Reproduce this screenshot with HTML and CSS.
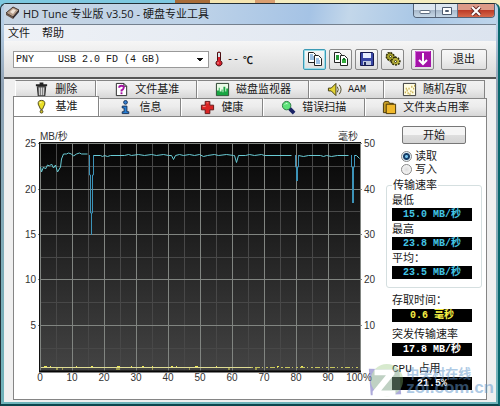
FILE: index.html
```html
<!DOCTYPE html>
<html lang="zh-CN">
<head>
<meta charset="utf-8">
<meta name="viewport" content="width=device-width">
<title>HD Tune 专业版 v3.50 - 硬盘专业工具</title>
<link rel="stylesheet" href="styles.css">
</head>
<body>
<div class="window">
  <header class="titlebar">
    <svg class="app-icon" viewBox="0 0 16 14" aria-hidden="true"><path d="M1 7 8 1l6 3-6 7z" fill="#b59c88" stroke="#40352f"/><path d="m1 7 7 4v2L1 9z" fill="#665247"/><path d="m8 11 6-7v2l-6 7z" fill="#30282a"/><path d="m5 6 3-3 3 1-3 4z" fill="#eee2d6"/></svg>
    <h1>HD Tune 专业版 v3.50 - 硬盘专业工具</h1>
    <div class="caption-buttons">
      <button type="button" aria-label="最小化"><svg viewBox="0 0 12 10"><rect x="1" y="4.500" width="10" height="3" rx="1" fill="#fff" stroke="#5d6c80"/></svg></button>
      <button type="button" aria-label="最大化"><svg viewBox="0 0 12 10"><path d="M1.500 1.500h9v7h-9z" fill="#fff" stroke="#4e5c70"/><path d="M4.500 4.500h3v1h-3z" fill="#fff" stroke="#4e5c70"/></svg></button>
      <button type="button" class="close" aria-label="关闭"><svg viewBox="0 0 12 10"><path d="m2 1 8 8m0-8-8 8" stroke="#6c2c29" stroke-width="4"/><path d="m2 1 8 8m0-8-8 8" stroke="#fff" stroke-width="2"/></svg></button>
    </div>
  </header>
  <nav class="menubar">
    <button type="button">文件</button>
    <button type="button">帮助</button>
  </nav>
  <div class="toolbar">
    <select class="drive" aria-label="驱动器"><option>PNY&nbsp;&nbsp;&nbsp;&nbsp;USB 2.0 FD (4 GB)</option></select>
    <div class="temperature">
      <svg viewBox="0 0 8 16" aria-hidden="true"><path d="M2.500 1.500q1.500-1 3 0v8q2 1.500 1.500 3.500-1 2-3 2t-3-2q-.5-2 1.500-3.500z" fill="#d8202c" stroke="#4b1114"/><path d="M3 2h2v4H3z" fill="#dbe8ec"/><path d="M3 11v2" stroke="#ff9c9c"/></svg>
      <span>--</span><b>℃</b>
    </div>
    <div class="actions">
      <button type="button" class="focused" aria-label="复制文本"><svg viewBox="0 0 16 16"><path d="M1.500 1.500h5l2 2v8h-7z" fill="#fff" stroke="#222"/><path d="M3 4h3M3 6h4M3 8h4" stroke="#3a80c8"/><path d="M7.500 4.500h4l3 3v7h-7z" fill="#fff" stroke="#222"/><path d="M9 8h3M9 10h4M9 12h4" stroke="#3a80c8"/></svg></button>
      <button type="button" aria-label="复制图像"><svg viewBox="0 0 16 16"><path d="M1.500 1.500h5l2 2v8h-7z" fill="#fff" stroke="#222"/><path d="M3 4h3v5H3z" fill="#269b38"/><path d="M7.500 4.500h4l3 3v7h-7z" fill="#fff" stroke="#222"/><path d="M9 8h4v4H9z" fill="#35ad3c"/><path d="M10 7h2v2h-2z" fill="#14712b"/></svg></button>
      <button type="button" aria-label="保存"><svg viewBox="0 0 16 16"><path d="M1.500 1.500h12l1 1v12h-13z" fill="#3947a5" stroke="#15184e"/><path d="M4 2h8v5H4z" fill="#e8efff"/><path d="M4 10h8v4H4z" fill="#bfc8df"/><path d="M5 11h2v3H5z" fill="#1d275f"/></svg></button>
      <button type="button" aria-label="选项"><svg viewBox="0 0 16 16"><path d="M5.500 1.500 8 3l2 3-1 3-4 1-3-2-1-3 2-3z" fill="#a9a42c" stroke="#302e0c" stroke-width="1.500" stroke-dasharray="2 1"/><path d="m10 6 3 1 2 3-1 3-3 1-4-1-1-3 2-3z" fill="#b7b03a" stroke="#302e0c" stroke-width="1.500" stroke-dasharray="2 1"/><circle cx="5.500" cy="5.500" r="1" fill="#fff" stroke="#403d10"/><circle cx="10.500" cy="10.500" r="1" fill="#fff" stroke="#403d10"/></svg></button>
      <button type="button" class="download" aria-label="最小化到托盘"><svg viewBox="0 0 16 16"><path d="M0 0h16v16H0z" fill="#a413a8"/><path d="M.5 15V.5H15" fill="none" stroke="#d56ad9"/><path d="M8 2v11M4 9l4 4 4-4" fill="none" stroke="#fff" stroke-width="2"/></svg></button>
      <button type="button" class="exit">退出</button>
    </div>
  </div>
  <main>
    <div class="tabs" role="tablist">
      <div class="tab-row back">
        <button type="button" role="tab" class="w81"><svg viewBox="0 0 16 16"><path d="M3.500 5h9l-1 10h-7z" fill="#777" stroke="#222"/><path d="M6 6v8m2-8v8m2-8v8" stroke="#ddd"/><path d="M2 3.500h12M6 1.500h4" stroke="#222" stroke-width="2"/></svg>删除</button>
        <button type="button" role="tab" class="w101"><svg viewBox="0 0 16 16"><path d="M2.500 1.500h8l3 3v10h-11z" fill="#fff" stroke="#222"/><path d="M10.500 1.500v3h3" fill="none" stroke="#222"/><path d="M5.500 6q0-2 2.500-2t2.500 2Q10 8 8 9v1" fill="none" stroke="#a512a3" stroke-width="2"/><path d="M7 11h2v2H7z" fill="#a512a3"/></svg>文件基准</button>
        <button type="button" role="tab" class="w112"><svg viewBox="0 0 16 16"><path d="M1.500 1.500h13v13h-13z" fill="#e8fae5" stroke="#223a28"/><path d="M2 9h2V6h1v4h2V8h1v3h1V5h2v5h1V7h2v7H2z" fill="#18a542"/></svg>磁盘监视器</button>
        <button type="button" role="tab" class="w75"><svg viewBox="0 0 16 16"><path d="M1.500 6.500h3l5-5v13l-5-5h-3z" fill="#e4d434" stroke="#3d3710"/><path d="M11 5q2 3 0 6m2-8q4 5 0 10" fill="none" stroke="#4b4520"/></svg><span class="mono">AAM</span></button>
        <button type="button" role="tab" class="w101"><svg viewBox="0 0 16 16"><path d="M1.500 1.500h13v13h-13z" fill="#fffce2" stroke="#333"/><path d="M3 11h1m1-2h1m0 3h1m0-5h1m1 3h1m0-5h1m1 2h1m-2 4h1m1-7h1M4 7h1m3 6h1" stroke="#b99a27" stroke-width="2"/></svg>随机存取</button>
      </div>
      <div class="tab-row front">
        <button type="button" role="tab" aria-selected="true" class="w85 active"><svg viewBox="0 0 16 16"><path d="M8 1.500q4 0 3.500 4L9 11H7L4.500 5.500Q4 1.500 8 1.500z" fill="#eadf27" stroke="#464115"/><circle cx="8" cy="13.500" r="1.500" fill="#d9cb26" stroke="#464115"/><path d="M6 4h2" stroke="#fffbd0"/></svg>基准</button>
        <button type="button" role="tab" class="w81"><svg viewBox="0 0 16 16"><circle cx="8" cy="2.500" r="2" fill="#3682d6" stroke="#173054"/><path d="M4.500 6.500h5v6h2v2h-7v-2h2v-4h-2z" fill="#2680d8" stroke="#173054"/></svg>信息</button>
        <button type="button" role="tab" class="w81"><svg viewBox="0 0 16 16"><path d="M5.500 1.500h5v4h4v5h-4v4h-5v-4h-4v-5h4z" fill="#da2424" stroke="#611616"/><path d="M7 3h2M3 7h3" stroke="#f58c84"/></svg>健康</button>
        <button type="button" role="tab" class="w101"><svg viewBox="0 0 16 16"><path d="m9 9 5 5" stroke="#192365" stroke-width="4"/><circle cx="6" cy="6" r="4.500" fill="#5de279" stroke="#27783f"/><path d="M4 5q1-2 3-1" fill="none" stroke="#d8ffde"/></svg>错误扫描</button>
        <button type="button" role="tab" class="w122"><svg viewBox="0 0 16 16"><path d="M1.500 3.500 3 1.500h4l1 2h4v10h-10.500z" fill="#c59c22" stroke="#443407"/><path d="M4.500 4.500h10v10h-10z" fill="#f0b82b" stroke="#443407"/></svg>文件夹占用率</button>
      </div>
    </div>
    <section class="panel">
      <svg class="chart" viewBox="14 116 364 270" role="img" aria-label="传输速率与存取时间">
        <defs><linearGradient id="plot" x2="0" y2="1"><stop stop-color="#050505"/><stop offset="1" stop-color="#444"/></linearGradient></defs>
        <path d="M39 141h322v230H39z" fill="url(#plot)"/>
        <path d="M56.500 142v228m32-228v228m32-228v228m32-228v228m32-228v228m32-228v228m32-228v228m32-228v228m32-228v228m32-228v228M40 165.500h320M40 210.500h320M40 256.500h320M40 301.500h320M40 347.500h320" stroke="#484848" fill="none"/>
        <path d="M40.500 142v228m32-228v228m32-228v228m32-228v228m32-228v228m32-228v228m32-228v228m32-228v228m32-228v228m32-228v228m32-228v228M38 142.500h324M38 188.500h324M38 233.500h324M38 278.500h324M38 324.500h324" stroke="#818581" fill="none"/>
        <path d="M39 141.500h322M39.500 141v230" stroke="#111"/><path d="M39 370.500h322" stroke="#050505" stroke-width="2"/>
        <path class="speed" d="M40.500 166l1 5 2-5 2 2 2-4 2 1 2-2 2 4 2-3 2 7 3-5 1-8 2-5 3 0 2-1 3 1 2 2 3-2 3-1 2 1h6"/>
        <path class="speed" d="M93.500 154.500h7l2 1 2-1 3 1 3-1h14l4-1 3 1 7-1 6 1 7-1 5 1 7-1 5 1 3 0 2 4 2-4 4-1 4 1 6-1 5 1 5-1 4 2 4-1 7-1 4 1 8-1 7 1h1l2 7 2-7 7 0 4-1 5 1 7-1 3 1h27"/>
        <path class="speed" d="M298.500 154.500l5 1 5-1h12l3 1 3-1 5 1 6-1h11m6 0 2 0 3 3"/>
        <g class="drop"><path d="M89.500 154v20h1v38h1v22m2-80v20h-1v38h-1v22"/><path d="M295.500 154v12h1v14m2-26v12h-1v14"/><path d="M351.500 154v12h1v36m2-48v12h-1v36"/></g>
        <path d="M41 366.500h210" stroke="#dedc93"/><path d="M251 366.500h109" stroke="#c6c55f" stroke-dasharray="2 2 5 2 1 3"/>
        <path d="M44 365.500h3m3 0h1m25 0h1m14 0h2m24 0h3m11 0h1m10 0h2m8 0h1m18 0h2m3 0h1m18 0h3m18 0h1m60 0h2m22 0h2M56 368h2m4 0h1m53 0h4m32 0h1m36 0h1m38 0h2m25 0h2" stroke="#f0eb54"/>
        <g class="axis">
          <text x="40" y="139">MB/秒</text><text x="338" y="139">毫秒</text>
          <g text-anchor="end"><text x="36" y="146">25</text><text x="36" y="192">20</text><text x="36" y="237">15</text><text x="36" y="282">10</text><text x="36" y="328">5</text></g>
          <text x="364" y="146">50</text><text x="364" y="192">40</text><text x="364" y="237">30</text><text x="364" y="282">20</text><text x="364" y="328">10</text>
          <g text-anchor="middle"><text x="40" y="380">0</text><text x="72" y="380">10</text><text x="104" y="380">20</text><text x="136" y="380">30</text><text x="168" y="380">40</text><text x="200" y="380">50</text><text x="232" y="380">60</text><text x="264" y="380">70</text><text x="296" y="380">80</text><text x="328" y="380">90</text><text x="359" y="380">100%</text></g>
        </g>
      </svg>
      <aside class="results">
        <button type="button" class="start">开始</button>
        <div class="modes">
          <label><input type="radio" name="mode" checked>读取</label>
          <label><input type="radio" name="mode">写入</label>
        </div>
        <fieldset>
          <legend>传输速率</legend>
          <label for="min">最低</label><output id="min">15.0 MB/秒</output>
          <label for="max">最高</label><output id="max">23.8 MB/秒</output>
          <label for="avg">平均：</label><output id="avg">23.5 MB/秒</output>
        </fieldset>
        <div class="stat"><label for="access">存取时间：</label><output id="access" class="yellow">0.6 毫秒</output></div>
        <div class="stat"><label for="burst">突发传输速率</label><output id="burst" class="white">17.8 MB/秒</output></div>
        <div class="stat"><label for="cpu">CPU 占用</label><output id="cpu" class="white">21.5%</output></div>
      </aside>
      <div class="watermark">
        <svg viewBox="0 0 36 40" aria-hidden="true"><path d="m1 7 32 1 2 26-32 1z" fill="#5f59b8"/><circle cx="20" cy="19" r="17" fill="#8fc575" fill-opacity=".7"/><path d="M7 8h21v5L14 30h15v6H5v-5l14-17H7z" fill="#fff"/></svg>
        <div><span class="site-name">中关村在线</span><span class="site-url">zol.com.cn</span></div>
      </div>
    </section>
  </main>
</div>
</body>
</html>
```
FILE: styles.css
```css
* { box-sizing: border-box; }
body {
  margin: 0;
  min-height: 100vh;
  display: flex;
  padding-top: 3px;
  background: linear-gradient(90deg, #7dc8e0 0 35%, #a86c38 35% 42%, #f5e5b0 42% 51%, #d99e70 51% 55%, #f5edc0 55%) top / 100% 10px no-repeat #173b42;
  font: 11px/13px "Liberation Sans", "Noto Sans CJK SC", sans-serif;
  color: #181818;
}
button, select, input { font: inherit; color: inherit; margin: 0; }
button { padding: 0; }
.window {
  flex: 1;
  display: flex;
  flex-direction: column;
  border: 1px solid #222f36;
  border-right: 2px solid #09676d;
  border-bottom: 2px solid #0b454c;
  border-radius: 6px 6px 0 0;
  padding: 0 2px 2px 3px;
  background: linear-gradient(#b5cee6 0 20px, #91a3b5 80px, #6fb3ba);
}
.titlebar {
  display: flex;
  align-items: flex-start;
  height: 20px;
  background: linear-gradient(100deg, #c7d5e3, #bdd2e8 40%, #a5c3e5 62%, #c3d7ea 70%, #a9c7e6 84%, #bed5eb);
}
.app-icon { width: 16px; height: 14px; margin: 2px 2px 0 1px; }
h1 { flex: 1; margin: 0; font: 11px/20px "Open Sans", "Noto Sans CJK SC", sans-serif; }
.caption-buttons {
  display: flex;
  height: 14px;
  margin-right: 1px;
  border: 1px solid #536175;
  border-top: 0;
  border-radius: 0 0 4px 4px;
  overflow: hidden;
}
.caption-buttons button {
  width: 22px;
  display: grid;
  place-items: center;
  border: 0;
  border-right: 1px solid #66758a;
  background: linear-gradient(#dce6f0 45%, #a8b9cc 50%, #c6d7e6);
}
.caption-buttons .close { width: 36px; border-right: 0; background: linear-gradient(#dd9a88 45%, #bd3c28 50%, #d7694b); }
.caption-buttons svg { width: 12px; height: 10px; }
.menubar {
  display: flex;
  gap: 12px;
  height: 17px;
  padding: 0 4px;
  border-top: 1px solid #74808e;
  background: linear-gradient(90deg, #eef1f6, #dce4ef);
}
.menubar button { border: 0; background: none; line-height: 16px; }
.toolbar {
  display: flex;
  align-items: center;
  height: 38px;
  padding: 0 9px;
  background: linear-gradient(#f6f6f6, #dadada);
  border-bottom: 2px solid #555;
}
.drive {
  width: 196px;
  height: 17px;
  padding: 0 2px;
  appearance: none;
  border: 1px solid #999;
  border-radius: 0;
  background: linear-gradient(#111, #111) right 5px top 6px / 6px 1px no-repeat, linear-gradient(#111, #111) right 6px top 7px / 4px 1px no-repeat, linear-gradient(#111, #111) right 7px top 8px / 2px 1px no-repeat, #fff;
  font: 10px/15px "Liberation Mono", monospace;
}
.temperature { display: flex; align-items: center; gap: 4px; margin-left: 6px; font: 10px "Liberation Mono", "Noto Sans CJK SC", monospace; }
.temperature svg { width: 8px; height: 16px; }
.actions { display: flex; gap: 3px; margin-left: auto; }
.actions button {
  display: grid;
  place-items: center;
  width: 23px;
  height: 21px;
  border: 1px solid #888;
  border-radius: 2px;
  background: linear-gradient(#f7f7f7, #eee 50%, #dedede);
}
.actions svg { width: 16px; height: 16px; }
.actions .focused { border-color: #3c9ab5; box-shadow: inset 0 0 0 1px #9bddea; }
.actions .download { margin-left: 4px; }
.actions .exit { width: 46px; margin-left: 4px; }
main { flex: 1; display: flex; flex-direction: column; padding: 1px 9px 2px; background: #efefef; }
.tab-row { display: flex; }
.back { padding: 0 2px; }
.tab-row button {
  min-width: 0;
  height: 18px;
  display: flex;
  align-items: center;
  justify-content: center;
  gap: 6px;
  border: 1px solid #858585;
  border-left-color: #fff;
  border-bottom: 0;
  background: linear-gradient(#f2f2f2, #ececec 45%, #d7d7d7);
  white-space: nowrap;
}
.tab-row svg { width: 15px; height: 15px; flex: none; }
.tab-row .active { height: 20px; margin: -2px 0 -1px; border-color: #858585; background: #fff; position: relative; }
.w75 { flex: 75 0 0; }
.w81 { flex: 81 0 0; }
.w85 { flex: 85 0 0; }
.w101 { flex: 101 0 0; }
.w112 { flex: 112 0 0; }
.w122 { flex: 122 0 0; }
.mono { font: 10px "Liberation Mono", monospace; }
.panel {
  flex: 1;
  position: relative;
  display: flex;
  align-items: flex-start;
  gap: 8px;
  padding-right: 4px;
  border: 1px solid #858585;
  background: #fff;
}
.chart { flex: 1; min-width: 0; }
.speed { fill: none; stroke: #69cbd5; stroke-width: 1; }
.drop { fill: none; stroke: #3c93b8; stroke-width: 1; }
.axis { font: 10px "Liberation Sans", "Noto Sans CJK SC", sans-serif; fill: #333; }
.results { width: 96px; padding-top: 9px; }
.start {
  display: block;
  width: 64px;
  height: 18px;
  margin: 0 auto;
  border: 1px solid #777;
  border-radius: 2px;
  background: linear-gradient(#f5f5f5 48%, #dedede 52%, #d4d4d4);
}
.modes { padding: 6px 0 3px 15px; }
.modes label { display: flex; align-items: center; gap: 3px; }
.modes input {
  appearance: none;
  width: 11px;
  height: 11px;
  border: 1px solid #888;
  border-radius: 50%;
  background: radial-gradient(#ddd, #fff);
}
.modes input:checked { background: radial-gradient(circle, #75c4ee 0 1px, #173e68 2px 3px, #e5eff5 4px); }
fieldset { margin: 0; min-width: 0; padding: 0 5px 8px; border: 1px solid #d5dfe0; border-radius: 3px; }
legend { padding: 0 1px; }
fieldset label, .stat label { display: block; height: 16px; line-height: 16px; white-space: nowrap; }
output {
  display: block;
  height: 13px;
  width: 80px;
  background: #000;
  color: #43c5e5;
  text-align: center;
  font: bold 10px/13px "Liberation Mono", "Noto Sans CJK SC", monospace;
}
.stat { padding: 5px 0 0 6px; font: 11px "Liberation Mono", "Noto Sans CJK SC", monospace; }
.yellow { color: #f6ef45; }
.white { color: #fff; }
.watermark {
  position: absolute;
  right: -8px;
  bottom: -1px;
  display: flex;
  align-items: center;
  gap: 3px;
  opacity: .5;
  pointer-events: none;
}
.watermark svg { width: 36px; height: 38px; }
.watermark span { display: block; color: #6096cc; }
.site-name { font: bold 13px/13px "Noto Sans CJK SC", sans-serif; }
.site-url { font: bold 17px/17px "Liberation Sans", sans-serif; }
```
